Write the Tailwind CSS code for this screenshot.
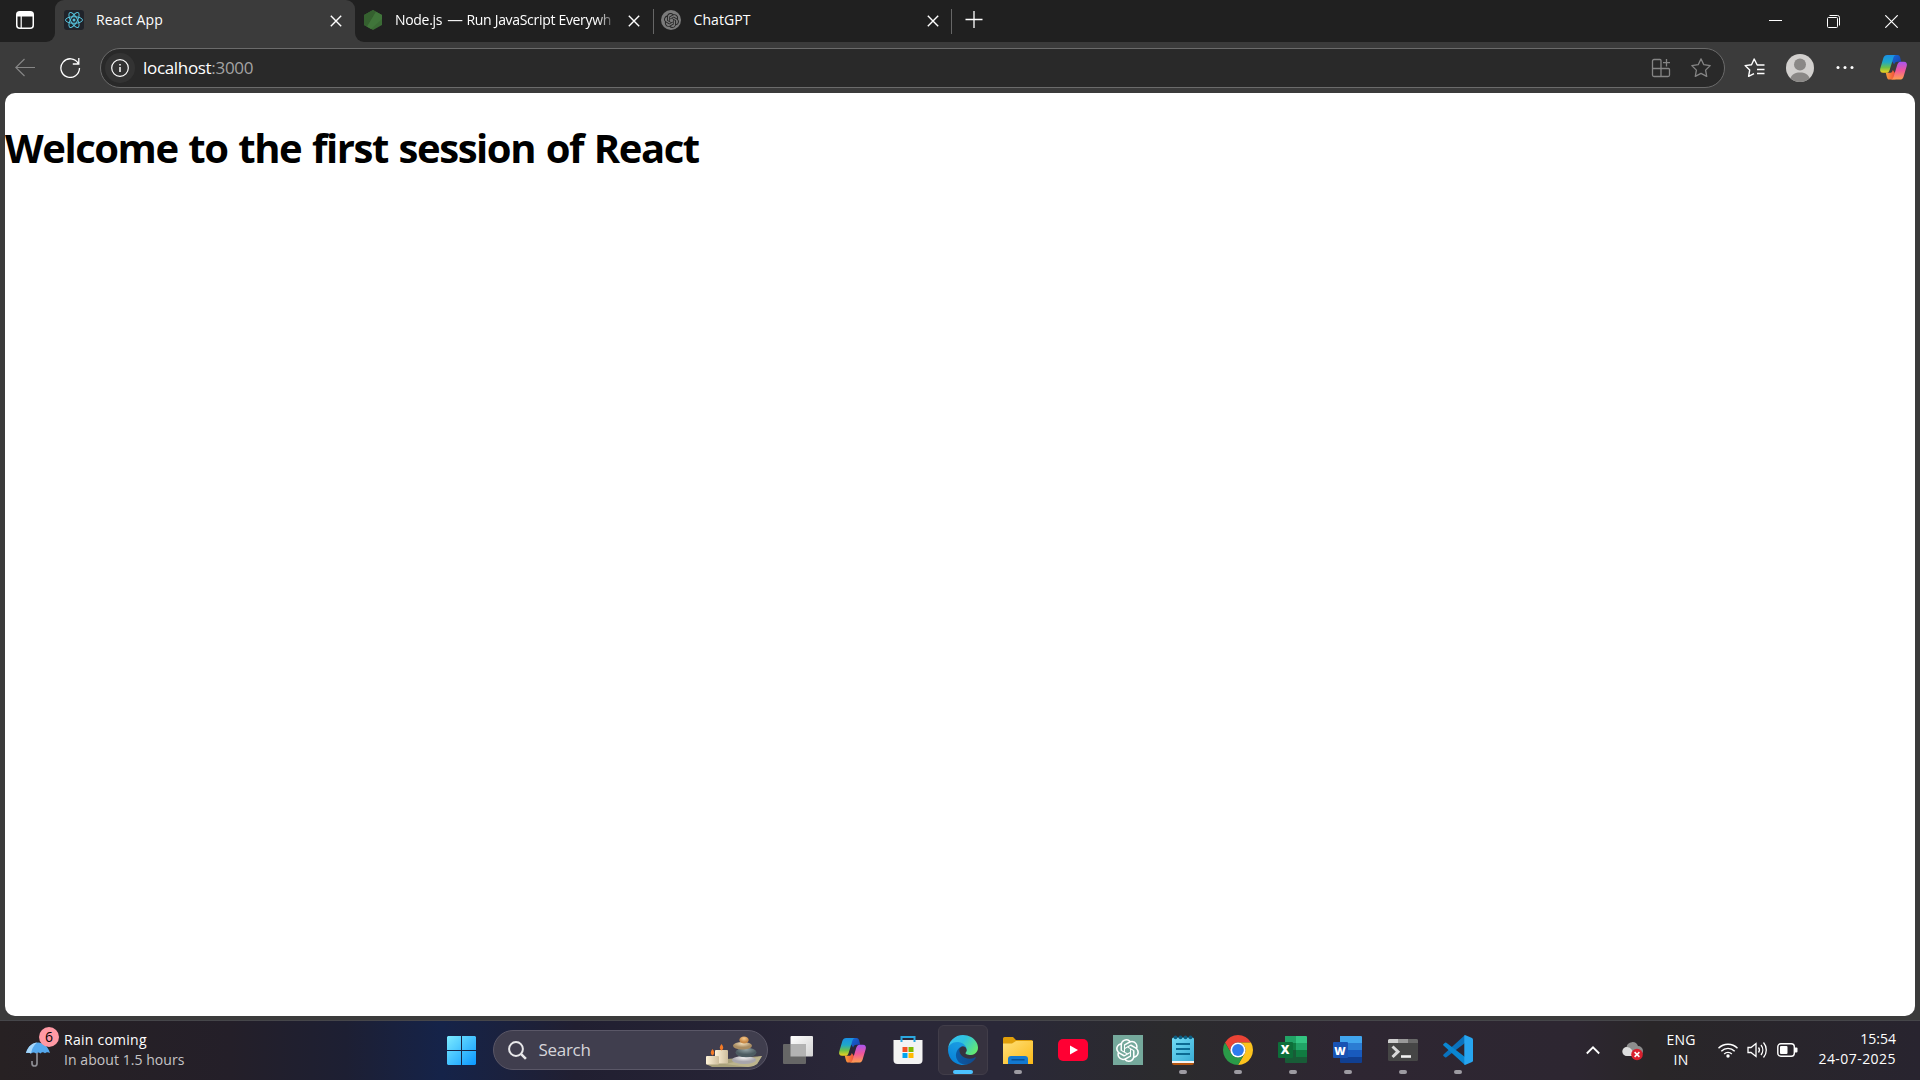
<!DOCTYPE html>
<html lang="en">
<head>
<meta charset="utf-8">
<title>React App</title>
<script src="https://cdn.jsdelivr.net/npm/@tailwindcss/browser@4"></script>
</head>
<body class="h-screen w-screen overflow-hidden bg-[#3b3b3b] font-['Open_Sans','Noto_Sans',sans-serif] text-white flex flex-col">
<svg class="absolute size-0">
  <defs>
    <linearGradient id="cpA" x1="0" y1="0" x2="0" y2="1"><stop offset="0" stop-color="#1a8fe6"/><stop offset=".4" stop-color="#1fa8c8"/><stop offset=".7" stop-color="#6cc04a"/><stop offset="1" stop-color="#f4d31c"/></linearGradient>
    <linearGradient id="cpB" x1="0" y1="0" x2="1" y2="1"><stop offset="0" stop-color="#1568d8"/><stop offset="1" stop-color="#1b3fa8"/></linearGradient>
    <linearGradient id="cpC" x1="0" y1="0" x2="0" y2="1"><stop offset="0" stop-color="#a855f0"/><stop offset=".5" stop-color="#f0569a"/><stop offset="1" stop-color="#ffa04d"/></linearGradient>
    <linearGradient id="cpD" x1="0" y1="0" x2="1" y2="0"><stop offset="0" stop-color="#f9a13b"/><stop offset="1" stop-color="#ee4a3c"/></linearGradient>
    <symbol id="copilot" viewBox="0 0 30 30">
      <path fill="url(#cpB)" d="M13 2h6.2c1.500 0 2.300 1 2.700 2.700L23 9h-4c-2 0-2.800 1-3.300 3L13 8z"/>
      <path fill="url(#cpD)" d="M17 27.500h-6.200c-1.500 0-2.300-1-2.700-2.700L7 20.500h4c2 0 2.800-1 3.300-3L17 21.500z"/>
      <path fill="url(#cpA)" d="M8.500 2H18c-1.800 0-2.600 1.300-3.200 3.200L11 17.500c-.7 2-1.600 3-3.600 3H4.300C1.600 20.500.6 18.500 1.300 16L4.600 5C5.200 3 6.500 2 8.500 2z"/>
      <path fill="url(#cpC)" d="M21.500 27.500H12c1.800 0 2.600-1.300 3.200-3.200L19 12c.7-2 1.600-3 3.600-3h3.100c2.700 0 3.700 2 3 4.500L25.400 24.500c-.6 2-1.900 3-3.900 3z"/>
    </symbol>
    <symbol id="openai" viewBox="0 0 24 24"><path d="M22.2819 9.8211a5.9847 5.9847 0 0 0-.5157-4.9108 6.0462 6.0462 0 0 0-6.5098-2.9A6.0651 6.0651 0 0 0 4.9807 4.1818a5.9847 5.9847 0 0 0-3.9977 2.9 6.0462 6.0462 0 0 0 .7427 7.0966 5.98 5.98 0 0 0 .511 4.9107 6.051 6.051 0 0 0 6.5146 2.9001A5.9847 5.9847 0 0 0 13.2599 24a6.0557 6.0557 0 0 0 5.7718-4.2058 5.9894 5.9894 0 0 0 3.9977-2.9001 6.0557 6.0557 0 0 0-.7475-7.0729zm-9.022 12.6081a4.4755 4.4755 0 0 1-2.8764-1.0408l.1419-.0804 4.7783-2.7582a.7948.7948 0 0 0 .3927-.6813v-6.7369l2.02 1.1686a.071.071 0 0 1 .038.052v5.5826a4.504 4.504 0 0 1-4.4945 4.4944zm-9.6607-4.1254a4.4708 4.4708 0 0 1-.5346-3.0137l.142.0852 4.783 2.7582a.7712.7712 0 0 0 .7806 0l5.8428-3.3685v2.3324a.0804.0804 0 0 1-.0332.0615L9.74 19.9502a4.4992 4.4992 0 0 1-6.1408-1.6464zM2.3408 7.8956a4.485 4.485 0 0 1 2.3655-1.9728V11.6a.7664.7664 0 0 0 .3879.6765l5.8144 3.3543-2.0201 1.1685a.0757.0757 0 0 1-.071 0l-4.8303-2.7865A4.504 4.504 0 0 1 2.3408 7.872zm16.5963 3.8558L13.1038 8.364 15.1192 7.2a.0757.0757 0 0 1 .071 0l4.8303 2.7913a4.4944 4.4944 0 0 1-.6765 8.1042v-5.6772a.79.79 0 0 0-.407-.667zm2.0107-3.0231l-.142-.0852-4.7735-2.7818a.7759.7759 0 0 0-.7854 0L9.409 9.2297V6.8974a.0662.0662 0 0 1 .0284-.0615l4.8303-2.7866a4.4992 4.4992 0 0 1 6.6802 4.66zM8.3065 12.863l-2.02-1.1638a.0804.0804 0 0 1-.038-.0567V6.0742a4.4992 4.4992 0 0 1 7.3757-3.4537l-.142.0805L8.704 5.459a.7948.7948 0 0 0-.3927.6813zm1.0976-2.3654l2.602-1.4998 2.6069 1.4998v2.9994l-2.5974 1.4997-2.6067-1.4997Z"/></symbol>
    <symbol id="close" viewBox="0 0 12 12"><path d="M.8.8l10.400 10.400M11.200.8L.8 11.200" fill="none" stroke="#fff" stroke-width="1.400"/></symbol>
  </defs>
</svg>

<!-- Tab strip -->
<header class="flex h-[42px] shrink-0 bg-[#3b3b3b] text-[14px]">
  <div class="flex w-[55px] items-start rounded-br-[9px] bg-[#202020] pl-4 pt-[11px]">
    <svg class="size-[18px]" viewBox="0 0 18 18"><rect x=".75" y=".75" width="16.500" height="16.500" rx="3" fill="none" stroke="#fff" stroke-width="1.500"/><path d="M1 3a2 2 0 0 1 2-2h12a2 2 0 0 1 2 2v2.500H1z" fill="#fff"/><path d="M5.200 5v12" stroke="#fff" stroke-width="1.200"/></svg>
  </div>
  <div class="flex w-[300px] bg-[#202020]">
    <div class="flex h-full w-full items-center rounded-t-[9px] bg-[#3b3b3b] pb-[2px] pl-[9px] pr-[13px]">
      <svg class="size-5 rounded-[3px] bg-[#20232a]" viewBox="0 0 20 20" fill="none" stroke="#56c3dd" stroke-width="1"><ellipse cx="10" cy="10" rx="8.500" ry="3.300"/><ellipse cx="10" cy="10" rx="8.500" ry="3.300" transform="rotate(60 10 10)"/><ellipse cx="10" cy="10" rx="8.500" ry="3.300" transform="rotate(120 10 10)"/><circle cx="10" cy="10" r="1.500" fill="#56c3dd" stroke="none"/></svg>
      <span class="ml-3 flex-1 pb-[2px] tracking-[0.15px]">React App</span>
      <svg class="mt-[2px] size-3"><use href="#close"/></svg>
    </div>
  </div>
  <div class="flex flex-1 rounded-bl-[9px] bg-[#202020] pb-[2px]">
    <div class="flex w-[298px] items-center pl-[9px] pr-[13px]">
      <svg class="h-5 w-[18px]" viewBox="0 0 18 20"><path d="M9 0l9 5v10l-9 5-9-5V5z" fill="#3b6b35"/><path d="M9 0L0 5v10l3 1.700L12 1.700z" fill="#35602f"/><path d="M3 16.700L12 1.700 18 5v4L7 19z" fill="#40753a"/></svg>
      <span class="ml-[13px] w-[222px] overflow-hidden whitespace-nowrap pb-[2px] tracking-[-0.31px] [mask-image:linear-gradient(to_right,#000_91%,transparent)]">Node.js <span class="mr-[2px] inline-block origin-left scale-x-[1.12] pl-[2px]">—</span> Run JavaScript Everywh</span>
      <svg class="ml-auto mt-[2px] size-3"><use href="#close"/></svg>
    </div>
    <div class="mt-[9px] h-[25px] w-px bg-[#666]"></div>
    <div class="flex w-[297px] items-center pl-[7px] pr-[12px]">
      <div class="grid size-5 place-items-center rounded-full bg-[#7b7b7b]"><svg class="size-[15px] fill-[#262626]"><use href="#openai"/></svg></div>
      <span class="ml-[12.5px] flex-1 pb-[2px] tracking-[0.1px]">ChatGPT</span>
      <svg class="mt-[2px] size-3"><use href="#close"/></svg>
    </div>
    <div class="mt-[9px] h-[25px] w-px bg-[#666]"></div>
    <svg class="ml-[13px] mt-[11px] size-[18px]" viewBox="0 0 18 18"><path d="M9 0v17M.500 8.500h17" stroke="#fff" stroke-width="1.300"/></svg>
    <div class="ml-auto flex pt-[15px]">
      <svg class="mr-[45px] h-[13px] w-[13px]" viewBox="0 0 13 13"><path d="M0 5.500h13" stroke="#fff"/></svg>
      <svg class="mr-[45px] size-[13px]" viewBox="0 0 13 13" fill="none" stroke="#fff"><rect x=".500" y="2.500" width="10" height="10" rx="1"/><path d="M2.500.500h8a2 2 0 0 1 2 2v8"/></svg>
      <svg class="mr-[22px] size-[13px]" viewBox="0 0 13 13"><path d="M.300.300l12.400 12.400M12.700.300L.300 12.700" stroke="#fff" stroke-width="1.200"/></svg>
    </div>
  </div>
</header>

<!-- Address bar row -->
<nav class="flex h-[51px] shrink-0 items-start pt-[6px]">
  <svg class="ml-[15px] mt-[10px] h-[20px] w-5" viewBox="0 0 20 20" fill="none" stroke="#868686" stroke-width="1.200"><path d="M20 9.500H.800M9.500 1L.800 9.500l8.700 8.500"/></svg>
  <svg class="ml-[25px] mt-[9px] size-[21px]" viewBox="0 0 21 21" fill="none" stroke="#fff" stroke-width="1.300"><path d="M18.300 6.500A9.300 9.300 0 1 0 19.500 11M18.800 1v6h-6"/></svg>
  <div class="ml-[19px] flex h-[40px] w-[1625px] items-center rounded-full border border-[#6b6b6b] bg-[#292929] pl-[4px] pr-[13px]">
    <div class="grid size-[30px] place-items-center rounded-full bg-[#333]"><svg class="size-[18px]" viewBox="0 0 18 18" fill="none" stroke="#fff" stroke-width="1.200"><circle cx="9" cy="9" r="8.300"/><path d="M9 8v5M9 5v1.500" stroke-width="1.500"/></svg></div>
    <span class="ml-[8px] pb-[1px] text-[17px] tracking-[-0.32px]">localhost<span class="text-[#a3a3a3]">:3000</span></span>
    <svg class="ml-auto size-[20px]" viewBox="0 0 20 20" fill="none" stroke="#858585" stroke-width="1.300"><path d="M10 10.500V2.500a1 1 0 0 0-1-1H3a1.500 1.500 0 0 0-1.500 1.500v14A1.500 1.500 0 0 0 3 18.500h14a1.500 1.500 0 0 0 1.500-1.500v-5.500a1 1 0 0 0-1-1H1.500M10 10.500v8M15.500 1v7.500M12 4.700h7"/></svg>
    <svg class="ml-[20px] size-5" viewBox="0 0 20 20" fill="none" stroke="#858585" stroke-width="1.300" stroke-linejoin="round"><path d="M10 .900l2.800 5.800 6.400.900-4.600 4.500 1.100 6.300L10 15.400l-5.700 3 1.100-6.300L.800 7.600l6.400-.900z"/></svg>
  </div>
  <svg class="ml-[19px] mt-[10px] h-5 w-[21px]" viewBox="0 0 21 20" fill="none" stroke="#fff" stroke-width="1.400" stroke-linejoin="round"><path d="M20.500 7h-7.300L10.200 1 7.500 6.700l-6.400.900 4.600 4.500-1.100 6.300L10 15.600M13 11.500h7.500M13 15.500h7.500"/></svg>
  <svg class="ml-[21px] mt-[6px] size-7 rounded-full bg-[#d2d0ce]" viewBox="0 0 28 28" fill="#8a8886"><circle cx="14" cy="10.500" r="6"/><path d="M4 28c0-7 4-9.500 10-9.500S24 21 24 28z"/></svg>
  <svg class="ml-[21.5px] mt-[17px] h-[5px] w-[18px] fill-white" viewBox="0 0 18 5"><circle cx="2" cy="2.500" r="1.500"/><circle cx="9" cy="2.500" r="1.500"/><circle cx="16" cy="2.500" r="1.500"/></svg>
  <svg class="ml-[25px] mt-[5px] size-[29px]"><use href="#copilot"/></svg>
</nav>

<!-- Page viewport -->
<main class="mx-[5px] h-[923px] shrink-0 overflow-hidden rounded-[10px] bg-white text-black">
  <h1 class="mt-[28px] whitespace-nowrap text-[40px] font-bold leading-[54px] tracking-[-1.45px] [word-spacing:1.8px]">Welcome to the first session of React</h1>
</main>

<!-- Taskbar -->
<footer class="mt-auto flex h-[60px] shrink-0 items-center border-t border-[#46464a] bg-[linear-gradient(90deg,#272123_0%,#241f29_12%,#1d1f33_18%,#152349_23%,#211f31_30%,#2a2738_45%,#2a2838_52%,#2b2b2d_61%,#2e2632_70%,#2d2631_82%,#292628_86%,#28242f_100%)] pb-[1px]">
  <div class="flex w-[434px] pl-[25px]">
    <div class="relative h-[44px] w-[39px]">
      <svg class="absolute left-0 top-[13px] h-[26px] w-[26px]" viewBox="0 0 26 26"><path d="M12 10v12.500a2.500 2.500 0 0 1-5 0V20" fill="none" stroke="#8d8d93" stroke-width="1.700"/><path d="M1 12C3 5 8 1.500 13 1.500S23 5 25 12q-3-1.500-5 .3-2.500-2-4.500.3-2.500-2-4.500 0-2.500-2-5 0-2-1.500-5-.6z" fill="#55a9ee"/><path d="M1 12C3 5 8 1.500 12 1.500Q7 6 6 12.600q-2-1.500-5-.6z" fill="#a6d7fa"/></svg>
      <div class="absolute left-[14px] top-[-1px] grid size-5 place-items-center rounded-full bg-[#ff99a4] text-[14px] leading-none text-black">6</div>
    </div>
    <div class="pt-[2px] text-[14px] leading-5"><p class="tracking-[0.25px]">Rain coming</p><p class="tracking-[0.06px] text-[#c6c4c6]">In about 1.5 hours</p></div>
  </div>
  <div class="grid w-[55px] place-items-center">
    <svg class="size-[29px]" viewBox="0 0 29 29"><defs><linearGradient id="win" x1="0" y1="0" x2="1" y2="1"><stop stop-color="#7cebff"/><stop offset="1" stop-color="#0a97ff"/></linearGradient></defs><path fill="url(#win)" d="M1 0h13v14H0V1zM15 0h13l1 1v13H15zM0 15h14v14H1l-1-1zM15 15h14v13l-1 1H15z"/></svg>
  </div>
  <div class="ml-[4px] mr-[2px] flex h-[40px] w-[275px] items-center overflow-hidden rounded-full border border-[#5a5767] bg-[#403e4e] pl-[14px] pr-[4px]">
    <svg class="size-[19px]" viewBox="0 0 19 19" fill="none" stroke="#e8e8ea" stroke-width="2"><circle cx="8" cy="8" r="6.900"/><path d="M12.900 12.900l5 5" stroke-width="2.600"/></svg>
    <span class="ml-[11.5px] text-[17px] tracking-[-0.3px] text-[#d6d5da]">Search</span>
    <svg class="ml-auto mt-[3px] h-[32px] w-[58px]" viewBox="0 0 58 32">
      <defs><linearGradient id="wax"><stop stop-color="#fff3d9"/><stop offset="1" stop-color="#cdbd9c"/></linearGradient><radialGradient id="st1" cy=".3"><stop stop-color="#f6c98c"/><stop offset="1" stop-color="#c98a47"/></radialGradient><radialGradient id="st2" cy=".2"><stop stop-color="#f2dfbb"/><stop offset="1" stop-color="#a98c62"/></radialGradient><radialGradient id="st3" cy=".2"><stop stop-color="#93a3a6"/><stop offset="1" stop-color="#4d5c62"/></radialGradient><radialGradient id="st4" cy=".2"><stop stop-color="#f5f4f5"/><stop offset="1" stop-color="#a9a6ac"/></radialGradient></defs>
      <path d="M1 28L22 23l35-3-5 8q-4 3-9 3H7z" fill="#a8a07a"/><path d="M20 28l37-8-5 8q-4 3-9 3z" fill="#bcb48d"/>
      <rect x="10" y="14" width="13" height="13.500" rx="1" fill="url(#wax)"/><rect x="1" y="20" width="13" height="8.500" rx="1" fill="url(#wax)"/>
      <path d="M16.500 8q3.500 4 0 6.500-3.500-2.500 0-6.500z" fill="#f47a26"/><path d="M7.500 13q3.500 4 0 6.500-3.500-2.500 0-6.500z" fill="#f47a26"/>
      <ellipse cx="39" cy="24" rx="12" ry="4" fill="url(#st4)"/><ellipse cx="41" cy="16.500" rx="10.500" ry="4.800" fill="url(#st3)"/><ellipse cx="37.500" cy="9.800" rx="9.500" ry="3.800" fill="url(#st2)"/><ellipse cx="39" cy="4" rx="4.700" ry="3.500" fill="url(#st1)"/>
    </svg>
  </div>

  <div class="grid h-[50px] w-[55px] place-items-center">
    <svg class="size-[30px]" viewBox="0 0 30 30"><defs><linearGradient id="tv" x1="0" y1="0" x2="1" y2="1"><stop stop-color="#fff"/><stop offset="1" stop-color="#d2d2d2"/></linearGradient></defs><rect x="7.500" y="1" width="22.500" height="20.500" rx="1" fill="url(#tv)"/><rect x="0" y="9" width="23" height="20" rx="1" fill="#666"/><rect x="7.500" y="9" width="15.500" height="12.500" fill="#b3b3b3"/></svg>
  </div>
  <div class="grid h-[50px] w-[55px] place-items-center"><svg class="size-[29px]"><use href="#copilot"/></svg></div>
  <div class="grid h-[50px] w-[55px] place-items-center">
    <svg class="size-[30px]" viewBox="0 0 30 30"><path d="M.500 5h29v20a4 4 0 0 1-4 4h-21a4 4 0 0 1-4-4z" fill="#f3f3f3"/><path d="M8.500 7V2h13v5" fill="none" stroke="#2ba8e0" stroke-width="2"/><path d="M9.500 12h5v5h-5z" fill="#f25022"/><path d="M15.500 12h5v5h-5z" fill="#7fba00"/><path d="M9.500 18h5v5h-5z" fill="#00a4ef"/><path d="M15.500 18h5v5h-5z" fill="#ffb900"/></svg>
  </div>
  <div class="grid h-[50px] w-[55px] place-items-center">
    <div class="relative grid size-[50px] place-items-center rounded-[6px] border border-[#413d49] bg-[#36323f]">
      <svg class="size-[30px]" viewBox="0 0 256 256"><defs><linearGradient id="e1" x1=".1" x2="1"><stop stop-color="#0c59a4"/><stop offset="1" stop-color="#114a8b"/></linearGradient><linearGradient id="e2" x1=".8" y1="0" x2=".3" y2="1"><stop stop-color="#1b9de2"/><stop offset=".4" stop-color="#1595df"/><stop offset="1" stop-color="#0680d7"/></linearGradient><linearGradient id="e3" x1="0" y1=".2" x2="1" y2=".7"><stop stop-color="#35c1f1"/><stop offset=".45" stop-color="#2fc2df"/><stop offset="1" stop-color="#66eb6e"/></linearGradient></defs><path fill="url(#e1)" d="M231 190.500c-3.400 1.800-6.900 3.400-10.500 4.700a101.300 101.300 0 0 1-35.700 6.400c-47 0-88-32.300-88-73.900a31.400 31.400 0 0 1 16.400-27.300c-42.600 1.800-53.500 46.200-53.500 72.100 0 73.500 67.700 80.900 82.300 80.900 7.900 0 19.700-2.300 26.900-4.500l1.200-.4a128.300 128.300 0 0 0 66.600-52.800 4 4 0 0 0-5.700-5.200z"/><path fill="url(#e2)" d="M105.700 241.400a79.200 79.200 0 0 1-22.700-21.300 80.700 80.700 0 0 1 29.500-119.700c3.200-1.400 8.500-4.100 15.600-4a32.400 32.400 0 0 1 25.700 13 31.900 31.900 0 0 1 6.300 18.700c0-.2 24.500-79.600-80-79.600-43.900 0-80 41.700-80 78.200a130.200 130.200 0 0 0 12.100 56 128 128 0 0 0 156.400 67.100 75.500 75.500 0 0 1-62.800-8z"/><path fill="url(#e3)" d="M152.300 148.900c-.8 1-3.300 2.500-3.300 5.700 0 2.600 1.700 5.100 4.700 7.200 14.400 10 41.500 8.700 41.600 8.700a59.600 59.600 0 0 0 30.300-8.300 61.400 61.400 0 0 0 30.400-52.900c.3-22.400-8-37.300-11.300-43.900C223.500 24.500 177.700.1 128 .1a128 128 0 0 0-128 126.200c.5-36.400 36.700-65.900 80-65.900 3.500 0 23.500.3 42 10.100 16.300 8.500 24.900 18.900 30.800 29.200 6.200 10.700 7.300 24.100 7.300 29.500 0 5.300-2.700 13.200-7.800 19.700z"/></svg>
      <span class="absolute bottom-0 left-[14px] h-1 w-5 rounded-full bg-[#4cc2ff]"></span>
    </div>
  </div>
  <div class="relative grid h-[50px] w-[55px] place-items-center">
    <svg class="size-[30px]" viewBox="0 0 30 30"><defs><linearGradient id="fo" x1="0" y1="0" x2="1" y2="1"><stop stop-color="#ffe07a"/><stop offset="1" stop-color="#fbb917"/></linearGradient></defs><path d="M0 3.500A1.500 1.500 0 0 1 1.500 2H10l3 3h15.500A1.500 1.500 0 0 1 30 6.500V12H0z" fill="#e09f0a"/><path d="M0 8.500h9L13 6h17v23H0z" fill="url(#fo)"/><path d="M5 24a3 3 0 0 1 3-3h14a3 3 0 0 1 3 3v5H5z" fill="#1379d0"/><path d="M8.500 24.800h13" stroke="#074b8c" stroke-width="1.300"/></svg>
    <span class="absolute bottom-[1px] left-[23.5px] h-1 w-2 rounded-full bg-[#9d9ba2]"></span>
  </div>
  <div class="grid h-[50px] w-[55px] place-items-center">
    <svg class="h-[22px] w-[30px]" viewBox="0 0 30 22"><rect width="30" height="22" rx="5" fill="#ff0033"/><path d="M12 6.500v9l8-4.500z" fill="#fff"/></svg>
  </div>
  <div class="grid h-[50px] w-[55px] place-items-center"><div class="grid size-[30px] place-items-center bg-[#75a99c]"><svg class="size-[23px] fill-white"><use href="#openai"/></svg></div></div>
  <div class="relative grid h-[50px] w-[55px] place-items-center">
    <svg class="size-[30px]" viewBox="0 0 30 30"><defs><linearGradient id="np" x1="0" y1="0" x2="1" y2="1"><stop stop-color="#72dcf5"/><stop offset="1" stop-color="#3aaed6"/></linearGradient></defs><path d="M4 24h22v4a2 2 0 0 1-2 2H6a2 2 0 0 1-2-2z" fill="#b5560f"/><path d="M4 22h22v6H4z" fill="#f3f3f3"/><path d="M4 4a1.500 1.500 0 0 1 1.500-1.500h19A1.500 1.500 0 0 1 26 4v22H4z" fill="url(#np)"/><path d="M8 9h14M8 14h14M8 19h14" stroke="#0b6b93" stroke-width="1.800"/><g fill="#0d5f83"><circle cx="7.500" cy="2.300" r="1.900"/><circle cx="12.500" cy="2.300" r="1.900"/><circle cx="17.500" cy="2.300" r="1.900"/><circle cx="22.500" cy="2.300" r="1.900"/></g></svg>
    <span class="absolute bottom-[1px] left-[23.5px] h-1 w-2 rounded-full bg-[#9d9ba2]"></span>
  </div>
  <div class="relative grid h-[50px] w-[55px] place-items-center">
    <svg class="size-[30px]" viewBox="0 0 30 30"><path d="M2.010 7.500A15 15 0 0 1 27.990 7.500H15a7.500 7.500 0 0 0-6.500 11.250z" fill="#ea4335"/><path d="M2.010 7.500A15 15 0 0 1 27.990 7.500H15a7.500 7.500 0 0 0-6.500 11.250z" fill="#fcc31e" transform="rotate(120 15 15)"/><path d="M2.010 7.500A15 15 0 0 1 27.990 7.500H15a7.500 7.500 0 0 0-6.500 11.250z" fill="#2a9a48" transform="rotate(240 15 15)"/><circle cx="15" cy="15" r="7.600" fill="#fff"/><circle cx="15" cy="15" r="5.900" fill="#2f7bee"/></svg>
    <span class="absolute bottom-[1px] left-[23.5px] h-1 w-2 rounded-full bg-[#9d9ba2]"></span>
  </div>
  <div class="relative grid h-[50px] w-[55px] place-items-center">
    <div class="relative size-[30px]">
      <svg class="size-[30px]" viewBox="0 0 30 30"><path d="M7 1h11v7H7z" fill="#21a366"/><path d="M18 1h10q1 0 1 1v6H18z" fill="#33c481"/><path d="M7 8h11v7H7z" fill="#107c41"/><path d="M18 8h11v7H18z" fill="#21a366"/><path d="M7 15h11v7H7z" fill="#185c37"/><path d="M18 15h11v7H18z" fill="#107c41"/><path d="M7 22h22v5q0 1-1 1H8q-1 0-1-1z" fill="#185c37"/></svg>
      <div class="absolute left-0 top-[7px] grid h-[16px] w-[15px] place-items-center rounded-[1px] bg-[#0d6e39] text-[12px] font-extrabold leading-none">X</div>
    </div>
    <span class="absolute bottom-[1px] left-[23.5px] h-1 w-2 rounded-full bg-[#9d9ba2]"></span>
  </div>
  <div class="relative grid h-[50px] w-[55px] place-items-center">
    <div class="relative size-[30px]">
      <svg class="size-[30px]" viewBox="0 0 30 30"><path d="M7 1h21q1 0 1 1v6H7z" fill="#41a5ee"/><path d="M7 8h22v7H7z" fill="#2b7cd3"/><path d="M7 15h22v7H7z" fill="#185abd"/><path d="M7 22h22v5q0 1-1 1H8q-1 0-1-1z" fill="#103f91"/></svg>
      <div class="absolute left-0 top-[7px] grid h-[16px] w-[15px] place-items-center rounded-[1px] bg-[#1853b3] text-[11px] font-extrabold leading-none">W</div>
    </div>
    <span class="absolute bottom-[1px] left-[23.5px] h-1 w-2 rounded-full bg-[#9d9ba2]"></span>
  </div>
  <div class="relative grid h-[50px] w-[55px] place-items-center">
    <svg class="size-[30px]" viewBox="0 0 30 30"><rect y="4" width="30" height="22" rx="1.500" fill="#464646"/><path d="M0 8V5.500A1.500 1.500 0 0 1 1.500 4H10v4z" fill="#cfcfcf"/><path d="M10 4h10v4H10z" fill="#999"/><path d="M20 4h8.500A1.500 1.500 0 0 1 30 5.500V8H20z" fill="#686868"/><path d="M4.500 11.500l5.500 5.200-5.500 5.300" fill="none" stroke="#d9d9d9" stroke-width="3"/><path d="M13 21.500h10" stroke="#f2f2f2" stroke-width="2.600"/></svg>
    <span class="absolute bottom-[1px] left-[23.5px] h-1 w-2 rounded-full bg-[#9d9ba2]"></span>
  </div>
  <div class="relative grid h-[50px] w-[55px] place-items-center">
    <svg class="size-[30px]" viewBox="0 0 30 30"><path d="M22 0L.500 19.500q-.700.800 0 1.500L2 22.300q.700.600 1.400 0L22 8z" fill="#0a72bd"/><path d="M22 30L.500 10.500q-.700-.800 0-1.500L2 7.700q.700-.600 1.400 0L22 22z" fill="#0a86d1"/><path d="M22 0l7 3q1 .500 1 1.500v21q0 1-1 1.500l-7 3q-.500 0-.700-1V1q0-1 .7-1z" fill="#27a5f0"/></svg>
    <span class="absolute bottom-[1px] left-[23.5px] h-1 w-2 rounded-full bg-[#9d9ba2]"></span>
  </div>

  <!-- System tray -->
  <div class="ml-auto flex items-center pr-[24px]">
    <svg class="h-[10px] w-[14px]" viewBox="0 0 14 10"><path d="M.800 8.500L7 2.300l6.200 6.200" fill="none" stroke="#fff" stroke-width="1.800"/></svg>
    <svg class="ml-[22px] mt-[2px] h-[20px] w-[22px]" viewBox="0 0 22 20"><path d="M5 15a4.500 4.500 0 0 1-.5-9A6 6 0 0 1 16 5a5 5 0 0 1 0 10z" fill="#8d8d8d"/><path d="M5 15a4.500 4.500 0 0 1 0-9q3 0 5 3l3 6z" fill="#dedede"/><circle cx="15" cy="13.500" r="5.800" fill="#d9202e"/><path d="M12.600 11.100l4.800 4.800M17.400 11.100l-4.800 4.800" stroke="#fff" stroke-width="1.500"/></svg>
    <div class="ml-[21px] w-[32px] text-center text-[14px] leading-5 tracking-[0.2px]">ENG<br>IN</div>
    <svg class="ml-[20px] h-[16px] w-[22px]" viewBox="0 0 22 16" fill="none" stroke="#fff" stroke-width="1.400"><path d="M1.500 6.300a13.300 13.300 0 0 1 19 0M4.300 9.200a9.400 9.400 0 0 1 13.400 0M7.200 12a5.300 5.300 0 0 1 7.600 0"/><circle cx="11" cy="14" r="1.700" fill="#fff" stroke="none"/></svg>
    <svg class="ml-[8px] h-[18px] w-[21px]" viewBox="0 0 21 18" fill="none" stroke="#fff" stroke-width="1.300"><path d="M1 6.500h3L9 2.500v13l-5-4H1zM11.500 6.500a4 4 0 0 1 0 5M14 4a8 8 0 0 1 0 10M16.500 1.500a11.500 11.500 0 0 1 0 15"/></svg>
    <svg class="ml-[9px] h-[14px] w-[21px]" viewBox="0 0 21 14"><rect x=".800" y=".800" width="16.500" height="12.400" rx="3" fill="none" stroke="#fff" stroke-width="1.400"/><rect x="3" y="3" width="7.500" height="8" rx="1" fill="#fff"/><path d="M18 4.500h1.500q1 0 1 1v3q0 1-1 1H18z" fill="#fff"/></svg>
    <div class="ml-[17px] w-[81px] whitespace-nowrap pb-[2px] text-right text-[14px] leading-5"><p>15:54</p><p class="tracking-[0.45px]">24-07-2025</p></div>
  </div>
</footer>
</body>
</html>
